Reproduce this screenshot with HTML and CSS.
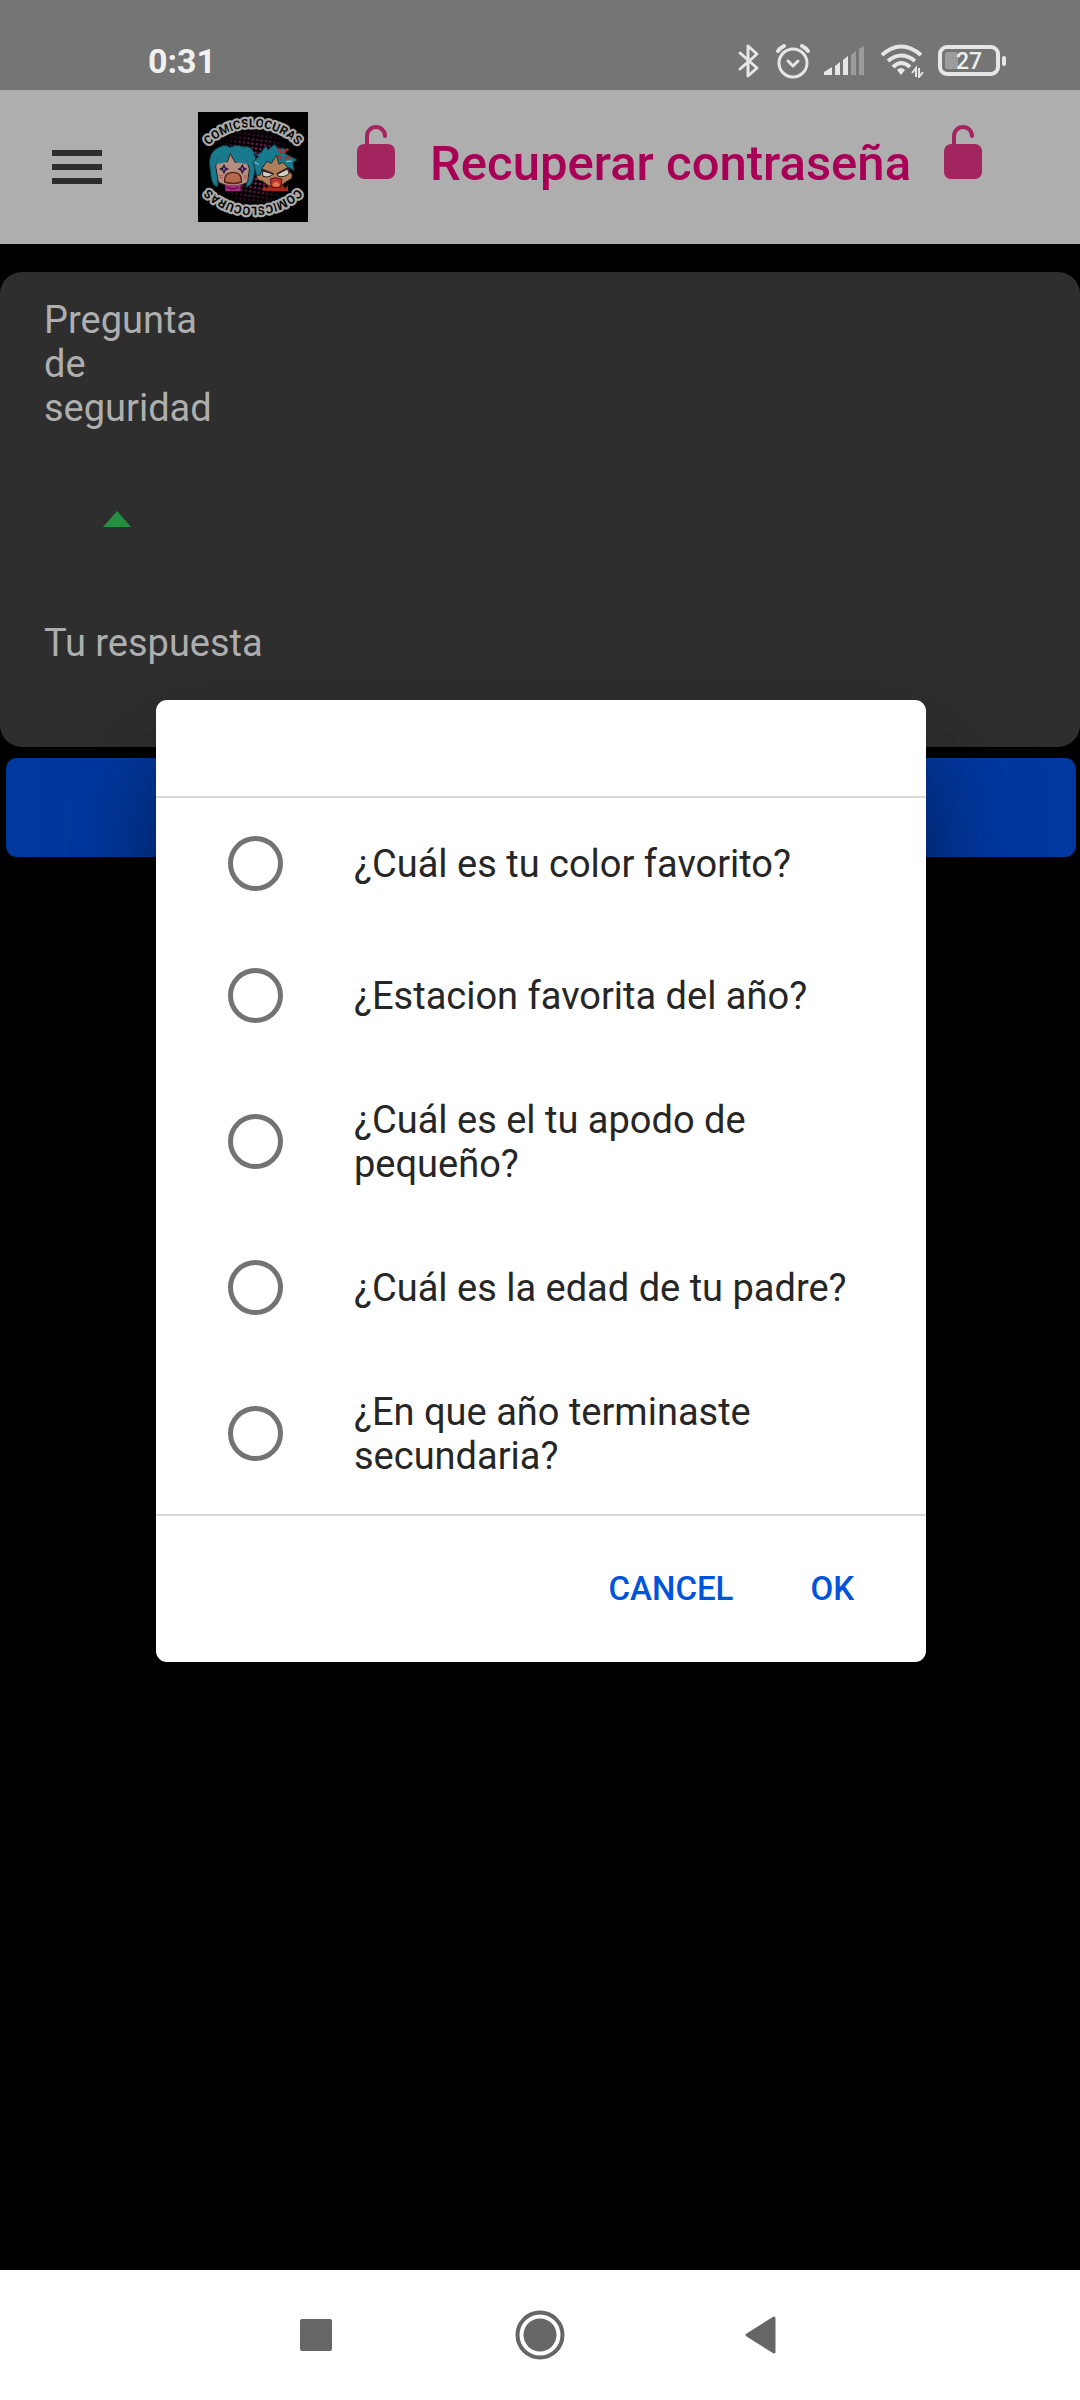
FILE: index.html
```html
<!DOCTYPE html>
<html lang="es">
<head>
<meta charset="utf-8">
<meta name="viewport" content="width=device-width, initial-scale=1">
<title>Recuperar contraseña</title>
<link rel="stylesheet" href="styles.css">
</head>
<body>
<div class="status-bar">
  <span class="clock">0:31</span>
  <div class="status-icons">
    <svg width="24" height="36" viewBox="0 0 24 36" fill="none" stroke="#e6e6e6" stroke-width="3" stroke-linejoin="round" stroke-linecap="round"><path d="M3 10 L20 25 L11 33 V3 L20 11 L3 26"/></svg>
    <svg class="icon-alarm" width="36" height="36" viewBox="0 0 36 36" fill="none" stroke="#e6e6e6" stroke-width="3" stroke-linejoin="round" stroke-linecap="round"><circle cx="18" cy="20" r="14"/><path d="M13 18 L18 23 L23 18"/><path stroke-width="4" d="M3 8 Q5 5 9 3 M33 8 Q31 5 27 3"/></svg>
    <svg class="icon-signal" width="42" height="30" viewBox="0 0 42 30"><path fill="#e6e6e6" d="M0 29 V26 L8 21 V29Z M11 29 V20 L16 16 V29Z M19 29 V14 L24 10 V29Z"/><path fill="#9c9c9c" d="M27 29 V9 L32 5 V29Z M35 29 V3 L40 0 V29Z"/></svg>
    <svg class="icon-wifi" width="44" height="34" viewBox="0 0 44 34"><g fill="none" stroke="#e6e6e6" stroke-width="4"><path d="M2 11 Q21 -6 41 11"/><path d="M8 17 Q21 6 35 17"/><path d="M13 23 Q21 15 30 23"/></g><path fill="#e6e6e6" d="M17 26 Q21 22 25 26 L21 31Z"/><path d="M36 33 V24 L32 29 M39 24 V33 L43 28" fill="none" stroke="#e6e6e6" stroke-width="2"/></svg>
    <svg class="icon-battery" width="70" height="32" viewBox="0 0 70 32"><rect x="2" y="2" width="58" height="27" rx="7" fill="none" stroke="#e6e6e6" stroke-width="4"/><rect x="7" y="7" width="13" height="17" rx="3" fill="#9c9c9c"/><rect x="64" y="11" width="4" height="10" rx="2" fill="#e6e6e6"/><text x="31" y="24" text-anchor="middle" class="battery-text">27</text></svg>
  </div>
</div>

<div class="app">
  <header class="toolbar">
    <button class="menu-button" type="button" aria-label="Menú">
      <svg width="50" height="34" viewBox="0 0 50 34" fill="#2d2d2d"><path d="M0 0H50V6H0Z M0 14H50V20H0Z M0 28H50V34H0Z"/></svg>
    </button>
    <svg class="logo" width="110" height="110" viewBox="0 0 330 330" role="img" aria-label="Comicslocuras">
      <defs>
        <pattern id="dots" width="13" height="13" patternUnits="userSpaceOnUse" patternTransform="rotate(8)"><circle cx="6" cy="6" r="4" fill="#8c2766"/></pattern>
        <radialGradient id="fade"><stop offset="0.4" stop-color="#000" stop-opacity="0"/><stop offset="1" stop-color="#000" stop-opacity="0.9"/></radialGradient>
        <path id="arc" d="M33 99 A190 190 0 0 1 297 99"/>
      </defs>
      <rect width="330" height="330"/>
      <circle cx="168" cy="164" r="116" fill="url(#dots)"/>
      <circle cx="168" cy="164" r="118" fill="url(#fade)"/>
      <text class="logo-text"><textPath href="#arc" startOffset="50%">COMICSLOCURAS</textPath></text>
      <text class="logo-text" transform="rotate(180 165 165)"><textPath href="#arc" startOffset="50%">COMICSLOCURAS</textPath></text>
      <path fill="#187a8c" stroke="#0d343d" stroke-width="3" d="M60 224 Q40 226 37 176 Q25 120 64 105 Q82 95 95 106 Q120 95 135 105 Q157 98 170 124 Q177 152 168 190 Q164 222 144 225 L148 170 H58Z"/>
      <path fill="#b58e80" stroke="#352027" stroke-width="3" d="M53 162 L62 139 L88 150 L97 125 L111 151 L145 144 L154 170 L149 211 Q106 235 61 211Z"/>
      <path fill="#187a8c" d="M53 157 Q68 119 94 119 L85 151Z M104 121 Q130 120 156 158 L115 151Z"/>
      <path fill="#2c173d" d="M78 155 l5 11 l10 5 l-10 5 l-5 11 l-5 -11 l-10 -5 l10 -5z M133 155 l5 11 l10 5 l-10 5 l-5 11 l-5 -11 l-10 -5 l10 -5z"/>
      <path fill="#aa70aa" d="M78 165 l3 6 l-3 6 l-3 -6z M133 165 l3 6 l-3 6 l-3 -6z"/>
      <path fill="#b3684c" stroke="#542018" stroke-width="4" d="M80 210 Q78 181 105 181 Q132 181 130 210 Q105 219 80 210Z"/>
      <path stroke="#b55353" stroke-width="3" d="M62 191h14 M62 197h12 M136 192h13 M137 198h11"/>
      <path fill="#a62b7d" d="M82 217 Q105 224 128 217 V238 H82Z"/>
      <path fill="none" stroke="#40123a" stroke-width="3" d="M86 226 l18 5 l18 -5"/>
      <path fill="#a52b20" d="M192 236 L197 222 L207 228 L216 218 H254 L261 230 L270 220 V238Z"/>
      <path fill="#b07e58" stroke="#352027" stroke-width="3" d="M183 183 Q171 184 179 203 L194 208 Q230 242 262 211 L280 200 Q287 185 275 181 L265 149 L238 126 L204 150Z"/>
      <path fill="#187a8c" stroke="#0d343d" stroke-width="3" d="M175 190 L166 151 L182 132 L167 129 L188 123 L203 102 L210 113 L230 97 L240 110 L258 108 L263 126 L297 143 L285 152 L289 176 L269 165 L254 151 L243 157 L235 130 L220 154 L207 148 L194 165 L187 189Z"/>
      <path fill="#cfcfc6" stroke="#26181b" stroke-width="3" d="M193 177 L225 185 Q215 199 195 193Z M237 185 L269 171 L273 185 Q256 199 240 192Z"/>
      <path fill="none" stroke="#302024" stroke-width="5" d="M191 172 L227 186 M237 186 L271 167"/>
      <path fill="#c4302c" stroke="#4b1519" stroke-width="3" d="M217 201 L233 197 L252 202 L248 226 H220Z"/>
      <path fill="#dc7b51" d="M223 216 L234 208 L246 217 L241 224 H227Z"/>
      <path fill="none" stroke="#a52f2d" stroke-width="7" d="M240 111 q12 4 9 15 M258 126 q1 -15 14 -13 M236 133 q15 -3 13 12 M262 144 q2 -12 16 -6"/>
      <path fill="none" stroke="#74b5bd" stroke-width="4" d="M169 150 l13 8 M264 149 l17 -2"/>
    </svg>
    <svg class="lock" width="40" height="54" viewBox="0 0 40 54"><rect x="1" y="19" width="38" height="35" rx="7" fill="#a22560"/><path d="M11 22 V11 A9 9 0 0 1 29 11" fill="none" stroke="#a22560" stroke-width="4" stroke-linecap="round"/></svg>
    <h1 class="title">Recuperar contraseña</h1>
    <svg class="lock" width="40" height="54" viewBox="0 0 40 54"><rect x="1" y="19" width="38" height="35" rx="7" fill="#a22560"/><path d="M11 22 V11 A9 9 0 0 1 29 11" fill="none" stroke="#a22560" stroke-width="4" stroke-linecap="round"/></svg>
  </header>

  <main class="content">
    <form class="form">
      <div class="card">
        <div class="field">
          <label class="field-label narrow" for="question">Pregunta de seguridad</label>
          <div class="select-box">
            <select id="question" class="select"><option value=""></option></select>
            <svg class="caret" width="28" height="16" viewBox="0 0 28 16"><path d="M14 0 L28 16 H0Z" fill="#21913f"/></svg>
          </div>
        </div>
        <div class="field">
          <label class="field-label" for="answer">Tu respuesta</label>
          <input id="answer" class="answer" type="text">
        </div>
      </div>
      <button class="submit" type="submit" aria-label="Enviar"></button>
    </form>
  </main>

  <div class="overlay">
    <form class="dialog" role="dialog" aria-label="Pregunta de seguridad">
      <div class="dialog-head"></div>
      <div class="options">
        <label class="option"><input class="radio" type="radio" name="q"><span>¿Cuál es tu color favorito?</span></label>
        <label class="option"><input class="radio" type="radio" name="q"><span>¿Estacion favorita del año?</span></label>
        <label class="option"><input class="radio" type="radio" name="q"><span>¿Cuál es el tu apodo de pequeño?</span></label>
        <label class="option"><input class="radio" type="radio" name="q"><span>¿Cuál es la edad de tu padre?</span></label>
        <label class="option"><input class="radio" type="radio" name="q"><span>¿En que año terminaste secundaria?</span></label>
      </div>
      <div class="actions">
        <button class="action" type="button">CANCEL</button>
        <button class="action" type="button">OK</button>
      </div>
    </form>
  </div>
</div>

<nav class="nav-bar">
  <button class="nav-button" type="button" aria-label="Recientes"><svg width="50" height="50" viewBox="0 0 50 50"><rect x="9" y="9" width="32" height="32" rx="2" fill="#666"/></svg></button>
  <button class="nav-button" type="button" aria-label="Inicio"><svg width="50" height="50" viewBox="0 0 50 50"><circle cx="25" cy="25" r="22.5" fill="none" stroke="#666" stroke-width="4"/><circle cx="25" cy="25" r="16.5" fill="#666"/></svg></button>
  <button class="nav-button" type="button" aria-label="Atrás"><svg width="50" height="50" viewBox="0 0 50 50"><path d="M8 25 L35 8 V42Z" fill="#666" stroke="#666" stroke-width="3" stroke-linejoin="round"/></svg></button>
</nav>
</body>
</html>
```
FILE: styles.css
```css
* { box-sizing: border-box; }

body {
  margin: 0;
  min-height: 100vh;
  display: flex;
  flex-direction: column;
  background: #000;
  font-family: Roboto, sans-serif;
  font-size: 38px;
  line-height: 44px;
}

button {
  margin: 0;
  padding: 0;
  border: 0;
  background: none;
  font-family: inherit;
}

svg { display: block; flex: none; }

/* System status bar */
.status-bar {
  display: flex;
  justify-content: space-between;
  align-items: flex-end;
  height: 90px;
  padding: 0 72px 7px 148px;
  background: #757575;
  color: #f0f0f0;
}
.clock { font-size: 34px; font-weight: 700; }
.status-icons { display: flex; align-items: center; height: 44px; }
.icon-alarm { margin-left: 14px; }
.icon-signal { margin-left: 13px; }
.icon-wifi { margin-left: 14px; }
.icon-battery { margin-left: 14px; }
.battery-text { font-size: 23px; font-weight: 500; fill: #f0f0f0; }

/* App area */
.app {
  position: relative;
  flex: 1;
  display: flex;
  flex-direction: column;
}
.toolbar {
  display: flex;
  align-items: center;
  height: 154px;
  padding-left: 52px;
  background: #aeaeae;
}
.menu-button { margin-right: 96px; }
.logo { margin-right: 48px; }
.logo-text {
  font-size: 36px;
  font-weight: 700;
  text-anchor: middle;
  fill: #080808;
  stroke: #aaa;
  stroke-width: 13px;
  stroke-linejoin: round;
  paint-order: stroke;
}
.lock { margin-bottom: 30px; }
.title {
  margin: 0 32px 6px 34px;
  font-size: 49px;
  font-weight: 500;
  line-height: 56px;
  white-space: nowrap;
  color: #a80057;
}

.content { padding-top: 28px; }
.card {
  min-height: 475px;
  padding: 26px 44px;
  border-radius: 22px;
  background: #2e2e2e;
}
.field-label { display: block; color: #aeaeae; }
.narrow { width: min-content; }
.select-box {
  display: flex;
  align-items: center;
  width: 144px;
  height: 191px;
  padding: 0 0 14px 59px;
  position: relative;
}
.select {
  position: absolute;
  inset: 0;
  appearance: none;
  border: 0;
  background: transparent;
}
.answer {
  display: block;
  width: 100%;
  height: 44px;
  padding: 0;
  border: 0;
  background: transparent;
  color: #aeaeae;
  font: inherit;
}
.submit {
  display: block;
  width: calc(100% - 10px);
  height: 99px;
  margin: 11px 4px 0 6px;
  border-radius: 11px;
  background: #0038a0;
}

/* Question picker */
.overlay {
  position: absolute;
  inset: 0;
  display: flex;
  align-items: center;
  justify-content: center;
  padding: 1px 0 0 2px;
}
.dialog {
  width: 770px;
  max-width: 90%;
  border-radius: 11px;
  background: #fff;
  color: #262626;
  box-shadow: 0 60px 100px rgba(0, 0, 0, 0.5);
}
.dialog-head { height: 96px; }
.options {
  border-top: 2px solid #d9d9d9;
  border-bottom: 2px solid #d9d9d9;
}
.option {
  display: flex;
  align-items: center;
  gap: 71px;
  min-height: 132px;
  padding: 36px 60px 36px 72px;
}
.radio {
  appearance: none;
  flex: none;
  width: 55px;
  height: 55px;
  margin: 0;
  border: 5px solid #737373;
  border-radius: 50%;
}
.radio:checked { border-width: 14px; }
.actions {
  display: flex;
  align-items: center;
  justify-content: flex-end;
  gap: 77px;
  height: 146px;
  padding-right: 72px;
}
.action {
  font-size: 33px;
  font-weight: 500;
  line-height: 44px;
  color: #0054dc;
}

/* System navigation */
.nav-bar {
  display: flex;
  align-items: center;
  justify-content: center;
  gap: 174px;
  height: 130px;
  background: #fff;
}
```
